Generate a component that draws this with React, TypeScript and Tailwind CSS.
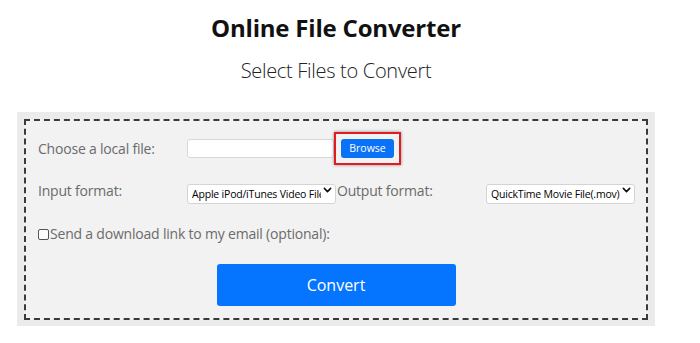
import React from "react";

function Chevron() {
  return (
    <svg width="9" height="9" viewBox="0 0 10 10" className="pointer-events-none absolute right-[4px] top-1/2 -translate-y-1/2">
      <path d="M1.5 3.2 L5 6.8 L8.5 3.2" fill="none" stroke="#111" strokeWidth="1.8" strokeLinecap="round" strokeLinejoin="round" />
    </svg>
  );
}

function Select({ value }: { value: string }) {
  return (
    <div className="relative w-[149px] h-[20px] shrink-0">
      <select
        defaultValue={value}
        className="appearance-none w-full h-full bg-white border border-[#d4d4d4] rounded-[3px] pl-[4px] pr-[14px] text-[10.5px] tracking-[-0.2px] text-black leading-[18px] overflow-hidden whitespace-nowrap"
        style={{ fontFamily: '"Open Sans", sans-serif' }}
      >
        <option>{value}</option>
      </select>
      <Chevron />
    </div>
  );
}

export default function App() {
  return (
    <div className="w-[700px] h-[343px] bg-white overflow-hidden" style={{ fontFamily: '"Open Sans", "Liberation Sans", sans-serif' }}>
      <div className="w-[638px] ml-[17px] flex flex-col">
        <h1 className="mt-[12px] text-center text-[24px] leading-[32px] font-bold tracking-[-0.2px] text-[#111]">Online File Converter</h1>
        <h2 className="mt-[13px] text-center text-[20px] leading-[28px] font-light tracking-[-0.3px] text-[#222]">Select Files to Convert</h2>
        <div className="mt-[27px] bg-[#ebebeb] px-[7px] pt-[7px] pb-[6px]">
          <div className="border-2 border-dashed border-[#3a3a3a] bg-[#f2f2f2] pt-[11px] pb-[12px] pl-[12px] pr-[12px] flex flex-col">
            <div className="flex items-center h-[32px]">
              <span className="w-[149px] shrink-0 text-[14px] tracking-[-0.2px] text-[#6b6b6b]">Choose a local file:</span>
              <div className="w-[147px] h-[19px] bg-white border border-[#d8d8d8] rounded-[3px] shrink-0" />
              <div className="border-2 border-[#e01b22] p-[5px] shadow-[0_0_3px_rgba(0,0,0,0.45)] shrink-0">
                <button className="w-[53px] h-[19px] bg-[#0a72f7] rounded-[3px] text-white text-[10.5px] leading-[19px] flex items-center justify-center">Browse</button>
              </div>
            </div>
            <div className="flex items-center h-[20px] mt-[16px]">
              <span className="w-[149px] shrink-0 text-[14px] tracking-[-0.2px] text-[#6b6b6b]">Input format:</span>
              <Select value="Apple iPod/iTunes Video File(.m4v)" />
              <span className="w-[150px] shrink-0 text-[14px] tracking-[-0.2px] text-[#6b6b6b] pl-[1px]">Output format:</span>
              <Select value="QuickTime Movie File(.mov)" />
            </div>
            <label className="flex items-center h-[20px] mt-[23px]">
              <span className="w-[11px] h-[11px] border border-[#555] rounded-[2px] bg-white mt-[2px] mr-[1px]" />
              <span className="text-[14px] tracking-[-0.2px] text-[#6b6b6b]">Send a download link to my email (optional):</span>
            </label>
            <div className="flex justify-center mt-[21px]">
              <button className="w-[239px] h-[42px] bg-[#0575ff] rounded-[3px] text-white text-[16px]">Convert</button>
            </div>
          </div>
        </div>
      </div>
    </div>
  );
}
